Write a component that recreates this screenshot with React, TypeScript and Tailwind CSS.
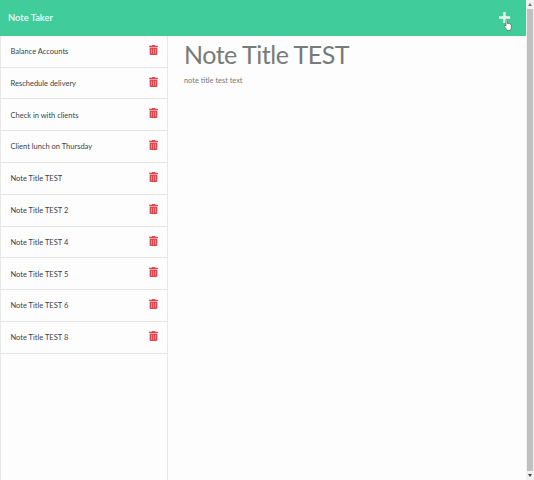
const notes = [
  'Balance Accounts',
  'Reschedule delivery',
  'Check in with clients',
  'Client lunch on Thursday',
  'Note Title TEST',
  'Note Title TEST 2',
  'Note Title TEST 4',
  'Note Title TEST 5',
  'Note Title TEST 6',
  'Note Title TEST 8',
];

function TrashIcon() {
  return (
    <svg viewBox="0 0 448 512" className="h-[10px] w-[9px]" preserveAspectRatio="none" fill="#d9484f">
      <path fill="#f0b0b3" d="M90 180h268v280H90z" />
      <path d="M32 464a48 48 0 0 0 48 48h288a48 48 0 0 0 48-48V128H32zm272-256a16 16 0 0 1 32 0v224a16 16 0 0 1-32 0zm-96 0a16 16 0 0 1 32 0v224a16 16 0 0 1-32 0zm-96 0a16 16 0 0 1 32 0v224a16 16 0 0 1-32 0zM432 32H312l-9.400-18.700A24 24 0 0 0 281.100 0H166.800a23.700 23.700 0 0 0-21.400 13.300L136 32H16A16 16 0 0 0 0 48v32a16 16 0 0 0 16 16h416a16 16 0 0 0 16-16V48a16 16 0 0 0-16-16z" />
    </svg>
  );
}

function HandCursor() {
  return (
    <svg viewBox="0 0 10 13" className="absolute left-[5px] top-[7px] h-[12px] w-[8px]" preserveAspectRatio="none" fill="#fff" stroke="#555e5b" strokeWidth="0.8" strokeLinejoin="round">
      <path d="M2.500 7.500V1.500a.9.900 0 0 1 1.800 0V5c.6-.5 1.400-.3 1.600.3.600-.4 1.400-.2 1.600.4.800-.4 1.700 0 1.700.9v2.600c0 1-.7 1.600-.9 3.100H3.600C3.300 10.900 1.500 9.600.6 7.800c-.3-.8.600-1.400 1.200-.8z" />
    </svg>
  );
}

export default function App() {
  return (
    <div className="flex h-[480px] w-[534px] overflow-hidden bg-[#fdfdfd] font-['Lato',sans-serif]">
      <div className="flex w-[525.500px] shrink-0 flex-col">
        <header className="flex h-[35.500px] shrink-0 items-center justify-between bg-[#40cc9b] pl-2 pr-[15.500px]">
          <h1 className="text-[9.400px] font-medium leading-none text-white">Note Taker</h1>
          <button className="relative flex h-[11px] w-[11px]">
            <svg viewBox="0 0 11 11" className="h-[11px] w-[11px]" fill="#e6f8f1">
              <path d="M4.300 0h2.400v4.300H11v2.400H6.700V11H4.300V6.700H0V4.300h4.300z" />
            </svg>
            <HandCursor />
          </button>
        </header>
        <div className="flex min-h-0 flex-1">
          <aside className="w-[168px] shrink-0 border-x border-[#e8e8e8]">
            <ul className="pt-[0.400px]">
              {notes.map((note) => (
                <li key={note} className="flex h-[31.800px] items-center justify-between border-b border-[#e4e4e4] pl-[9.500px] pr-[9.500px]">
                  <span className="pt-[0.800px] text-[7.500px] leading-none text-[#3c4245]">{note}</span>
                  <span className="-mt-[3px]">
                    <TrashIcon />
                  </span>
                </li>
              ))}
            </ul>
          </aside>
          <main className="pl-4 pt-[4px] text-[#777b79]">
            <h2 className="text-[25px] leading-[29px] tracking-[-0.480px]">Note Title TEST</h2>
            <p className="mt-[7px] text-[7.400px] leading-[10px]">note title test text</p>
          </main>
        </div>
      </div>
      <div className="flex min-w-0 flex-1 flex-col items-center bg-[#f1f1f1]">
        <div className="flex h-[9px] items-center">
          <svg viewBox="0 0 4 3" className="h-[3px] w-1" fill="#777"><path d="M0 3 2 0l2 3z" /></svg>
        </div>
        <div className="w-[6px] flex-1 bg-[#c0c0c0]" />
        <div className="flex h-[9px] items-center">
          <svg viewBox="0 0 4 3" className="h-[3px] w-1" fill="#444"><path d="M0 0h4L2 3z" /></svg>
        </div>
      </div>
    </div>
  );
}
